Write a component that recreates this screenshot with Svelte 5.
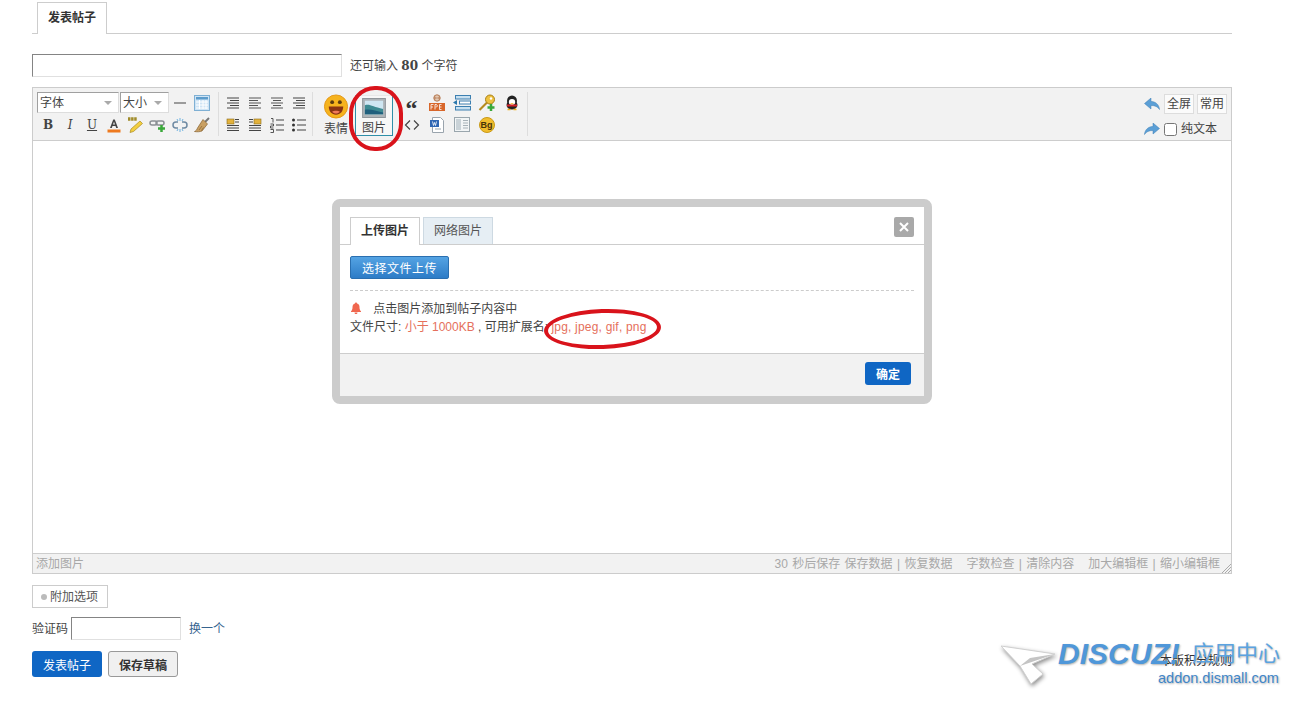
<script lang="ts">
  const tools = [
    { id: 'bold', label: 'B' },
    { id: 'italic', label: 'I' },
    { id: 'underline', label: 'U' }
  ];
</script>

{#snippet lines(kind: string)}
  <svg class="ico" viewBox="0 0 16 16" width="16" height="16">
    {#if kind === 'right'}
      <path d="M2 3h12M5 5.500h9M2 8h12M5 10.500h9M2 13h12" stroke="#444" fill="none" />
    {:else if kind === 'left'}
      <path d="M2 3h12M2 5.500h9M2 8h12M2 10.500h9M2 13h12" stroke="#555" fill="none" />
    {:else if kind === 'center'}
      <path d="M2 3h12M4 5.500h8M2 8h12M4 10.500h8M2 13h12" stroke="#555" fill="none" />
    {:else}
      <path d="M2 3h12M2 5.500h12M2 8h12M2 10.500h12M2 13h12" stroke="#444" fill="none" />
    {/if}
  </svg>
{/snippet}

<div class="page">
  <div class="tabs"><span class="tab">发表帖子</span></div>

  <div class="subject">
    <input class="subject-input" type="text" />
    <span>还可输入 <strong>80</strong> 个字符</span>
  </div>

  <div class="editor">
    <div class="toolbar">
      <div class="group g-font">
        <span class="sel sel-font">字体<i class="caret"></i></span>
        <span class="sel sel-size">大小<i class="caret"></i></span>
        <span class="cell">
          <svg class="ico" viewBox="0 0 16 16" width="16" height="16"><path d="M2 8h12" stroke="#444" /></svg>
        </span>
        <span class="cell">
          <svg class="ico" viewBox="0 0 16 16" width="16" height="16">
            <rect x=".5" y=".5" width="15" height="15" fill="#cfe4f5" stroke="#7fb0d4" />
            <rect x="2" y="2" width="12" height="2.500" fill="#5d9ccb" />
            <path d="M2 7h12M2 10h12M2 13h12M5.500 5v9M9 5v9M12 5v9" stroke="#fff" />
          </svg>
        </span>
        {#each tools as t}
          <span class="cell txt {t.id}">{t.label}</span>
        {/each}
        <span class="cell">
          <svg class="ico" viewBox="0 0 16 16" width="16" height="16">
            <path d="M4 11 7.200 2.500h1.600L12 11h-1.800l-.7-2h-3l-.7 2zM7 7.600h2L8 4.800z" fill="#444" />
            <rect x="1.500" y="12.500" width="13" height="3" fill="#ee7a1f" />
          </svg>
        </span>
        <span class="cell">
          <svg class="ico" viewBox="0 0 18 18" width="18" height="18">
            <path d="M3 16.500 4 13 13 5l2.500 2.500-9 8z" fill="#f3cf3f" stroke="#a98a22" stroke-width=".7" />
            <path d="M1 3h9" stroke="#a08c2b" stroke-width="3.500" stroke-dasharray="2.500 .6" />
          </svg>
        </span>
        <span class="cell">
          <svg class="ico" viewBox="0 0 18 18" width="18" height="18">
            <rect x="1" y="5" width="7" height="4" rx="2" fill="none" stroke="#8a8f94" stroke-width="1.500" />
            <rect x="7" y="5" width="8" height="4" rx="2" fill="none" stroke="#8a8f94" stroke-width="1.500" />
            <path d="M12.500 9v7M9 12.500h7" stroke="#3aa83a" stroke-width="2.500" />
          </svg>
        </span>
        <span class="cell">
          <svg class="ico" viewBox="0 0 18 18" width="18" height="18">
            <path d="M7 6H5a3 3 0 0 0 0 6h2M11 6h2a3 3 0 0 1 0 6h-2" fill="none" stroke="#6e8aa3" stroke-width="1.500" />
            <path d="M9 2v3M6 3l1 2M12 3l-1 2M9 13v3M6 15l1-2M12 15l-1-2" stroke="#6fb2e0" />
          </svg>
        </span>
        <span class="cell">
          <svg class="ico" viewBox="0 0 18 18" width="18" height="18">
            <path d="M12 6 16 2" stroke="#777" stroke-width="2" />
            <path d="M10 3.500 14.500 8 9 15c-2 .8-5 1-7.500.5 2-1 2.500-2 3-3.500z" fill="#c9a063" stroke="#86622f" stroke-width=".7" />
            <path d="M6 14l3-4M8.500 14.500l2-3" stroke="#86622f" stroke-width=".7" />
          </svg>
        </span>
      </div>

      <div class="group g-align">
        <span class="cell">{@render lines('right')}</span>
        <span class="cell">{@render lines('left')}</span>
        <span class="cell">{@render lines('center')}</span>
        <span class="cell">{@render lines('right')}</span>
        <span class="cell">
          <svg class="ico" viewBox="0 0 16 16" width="16" height="16">
            <rect x="2" y="2" width="7" height="5" fill="#e3b23c" stroke="#8b6c1b" stroke-width=".6" />
            <path d="M10 2.500h4M10 5h4M2 8.500h12M2 11h12M2 13.500h12" stroke="#444" />
          </svg>
        </span>
        <span class="cell">
          <svg class="ico" viewBox="0 0 16 16" width="16" height="16">
            <rect x="7" y="2" width="7" height="5" fill="#e3b23c" stroke="#8b6c1b" stroke-width=".6" />
            <path d="M2 2.500h4M2 5h4M2 8.500h12M2 11h12M2 13.500h12" stroke="#444" />
          </svg>
        </span>
        <span class="cell">
          <svg class="ico" viewBox="0 0 16 16" width="16" height="16">
            <path d="M7 3h8M7 8h8M7 13h8" stroke="#444" />
            <path d="M2 1.500h2v4M1.500 7h3v2h-3v2h3M1.500 12.500h3v3h-3" fill="none" stroke="#444" stroke-width=".9" />
          </svg>
        </span>
        <span class="cell">
          <svg class="ico" viewBox="0 0 16 16" width="16" height="16">
            <path d="M6 3h9M6 8h9M6 13h9" stroke="#444" />
            <circle cx="2.500" cy="3" r="1.500" fill="#333" />
            <circle cx="2.500" cy="8" r="1.500" fill="#333" />
            <circle cx="2.500" cy="13" r="1.500" fill="#333" />
          </svg>
        </span>
      </div>

      <div class="group g-insert">
        <div class="big">
          <svg viewBox="0 0 26 26" width="26" height="26">
            <circle cx="13" cy="13" r="12" fill="#f6b31d" stroke="#e3981a" />
            <circle cx="9" cy="8.500" r="2" fill="#5a3a10" />
            <circle cx="17" cy="8.500" r="2" fill="#5a3a10" />
            <path d="M5.500 13h15c0 5-3 8.500-7.500 8.500S5.500 18 5.500 13z" fill="#8a3312" />
            <path d="M9 18.500c2-1.500 6-1.500 8 0-2 2.500-6 2.500-8 0z" fill="#f07a5a" />
          </svg>
          <span>表情</span>
        </div>
        <div class="big active">
          <svg viewBox="0 0 26 22" width="26" height="22">
            <rect x=".5" y=".5" width="25" height="21" fill="#aeb4b8" stroke="#8a9196" />
            <rect x="3" y="3" width="20" height="15" fill="#cfe6f2" />
            <path d="M3 8c5-2 9 2 20 4v6H3z" fill="#3d8a92" />
            <path d="M3 13c6-1 12 1 20 3v2H3z" fill="#1f5f7d" />
          </svg>
          <span>图片</span>
        </div>
        <div class="g-misc">
          <span class="cell"><b class="quote">“</b></span>
          <span class="cell">
            <svg class="ico" viewBox="0 0 16 16" width="16" height="16"><path d="M6 3.500 1.500 8 6 12.500M10 3.500 14.500 8 10 12.500" fill="none" stroke="#444" stroke-width="1.200" /></svg>
          </span>
          <span class="cell">
            <svg class="ico" viewBox="0 0 18 18" width="18" height="18">
              <circle cx="9" cy="4" r="3.200" fill="#e4c9b4" stroke="#b57a52" />
              <path d="M7 2.500v3M11 2.500v3M6 4h6" stroke="#b57a52" stroke-width=".7" />
              <rect x="1" y="9" width="16" height="8" fill="#d8662a" />
              <path d="M3 15.500v-5h2.500M3 13h2M7 15.500v-5h1.500l1 1.500-1 1-1 0M11.500 10.500v5M11.500 10.500h2M11.500 13h2M11.500 15.500h2" fill="none" stroke="#fff" stroke-width=".8" />
            </svg>
          </span>
          <span class="cell">
            <svg class="ico" viewBox="0 0 16 16" width="16" height="16">
              <path d="M3.500 .5h8l3 3v12h-11z" fill="#fff" stroke="#9aa4ad" />
              <rect x="1" y="3" width="9" height="7" fill="#2f66b3" />
              <path d="M2.500 4.500l1 4 1-3 1 3 1-4" transform="translate(1 0)" fill="none" stroke="#fff" stroke-width=".8" />
              <path d="M6 12h6" stroke="#9aa4ad" />
            </svg>
          </span>
          <span class="cell">
            <svg class="ico" viewBox="0 0 18 18" width="18" height="18">
              <rect x="2.500" y="1.500" width="15" height="3.500" fill="#c8e0f0" stroke="#3c7fb0" />
              <rect x="6.500" y="7" width="11" height="3" fill="#fff" stroke="#3c7fb0" />
              <rect x="2.500" y="12.500" width="15" height="3.500" fill="#c8e0f0" stroke="#3c7fb0" />
              <path d="M0 8.500 4 6v5z" fill="#2b78ad" />
            </svg>
          </span>
          <span class="cell">
            <svg class="ico" viewBox="0 0 18 18" width="18" height="18">
              <rect x="1.500" y="1.500" width="15" height="14" fill="#f2f5f6" stroke="#9aa6ad" />
              <rect x="3" y="3" width="5" height="11" fill="#c9d2d7" />
              <path d="M10 4.500h5M10 7h5M10 9.500h5M10 12h5" stroke="#a7b2b8" />
            </svg>
          </span>
          <span class="cell">
            <svg class="ico" viewBox="0 0 18 18" width="18" height="18">
              <circle cx="12" cy="5.500" r="4.500" fill="#eec13f" stroke="#a98017" />
              <circle cx="13" cy="4.500" r="1.200" fill="#fff" />
              <path d="M9 8.500 1.500 16" stroke="#b58a1f" stroke-width="2.200" />
              <path d="M13 10v7M9.500 13.500h7" stroke="#3aa83a" stroke-width="2.500" />
            </svg>
          </span>
          <span class="cell">
            <span class="bg-badge">Bg</span>
          </span>
          <span class="cell">
            <svg class="ico" viewBox="0 0 16 16" width="16" height="16">
              <ellipse cx="8" cy="6" rx="5" ry="5.500" fill="#222" />
              <ellipse cx="8" cy="10" rx="5.500" ry="4.500" fill="#222" />
              <ellipse cx="8" cy="7" rx="3.200" ry="3" fill="#fff" />
              <path d="M3 9.500h10v2H3z" fill="#d8232a" />
              <path d="M6 8.200h4L8 9.600z" fill="#f3b21c" />
              <path d="M3.500 14.500h3M9.500 14.500h3" stroke="#f3b21c" stroke-width="1.500" />
            </svg>
          </span>
        </div>
      </div>

      <div class="right">
        <div class="right-row">
          <svg class="arrow" viewBox="0 0 16 12" width="16" height="12"><path d="M7 0v3.500c4 0 8 2.500 8.500 8C13.500 8.500 11 7.500 7 7.500V11L.5 5.500z" fill="#5b9fd6" stroke="#3c7fb5" stroke-width=".5" /></svg>
          <span class="mini">全屏</span>
          <span class="mini">常用</span>
        </div>
        <div class="right-row">
          <svg class="arrow" viewBox="0 0 16 12" width="16" height="12"><path d="M9 0v3.500c-4 0-8 2.500-8.500 8C2.500 8.500 5 7.500 9 7.500V11l6.500-5.500z" fill="#5b9fd6" stroke="#3c7fb5" stroke-width=".5" /></svg>
          <label class="plain"><input type="checkbox" />纯文本</label>
        </div>
      </div>
    </div>

    <div class="area">
      <div class="dialog">
        <div class="dialog-tabs">
          <span class="d-tab on">上传图片</span>
          <span class="d-tab">网络图片</span>
          <span class="close">
            <svg viewBox="0 0 10 10" width="10" height="10"><path d="M1 1l8 8M9 1 1 9" stroke="#fff" stroke-width="2" /></svg>
          </span>
        </div>
        <div class="dialog-body">
          <button class="upload">选择文件上传</button>
          <div class="notice">
            <p>
              <svg viewBox="0 0 12 12" width="12" height="12"><path d="M6 .5c.7 0 1 .5 1 1 2 .5 2.500 2 2.500 4 0 2 .7 3 1.500 3.800v.7H1v-.7C1.800 8.500 2.500 7.500 2.500 5.500c0-2 .5-3.500 2.500-4 0-.5.300-1 1-1zM4.500 10.500h3C7.500 11.500 6.800 12 6 12s-1.500-.5-1.500-1.500z" fill="#f0674f" /></svg>
              点击图片添加到帖子内容中
            </p>
            <p>文件尺寸: <em>小于 1000KB</em> , 可用扩展名: <em class="exts">jpg, jpeg, gif, png</em></p>
          </div>
        </div>
        <div class="dialog-foot"><button class="primary small">确定</button></div>
      </div>
    </div>

    <div class="status">
      <span class="add">添加图片</span>
      <span class="status-right">
        <span>30 秒后保存 保存数据 | 恢复数据</span>
        <span>字数检查 | 清除内容</span>
        <span>加大编辑框 | 缩小编辑框</span>
      </span>
      <svg class="grip" viewBox="0 0 10 10" width="10" height="10"><path d="M10 1 1 10M10 4 4 10M10 7 7 10" stroke="#aaa" /></svg>
    </div>
  </div>

  <div class="extra"><span class="dot"></span>附加选项</div>

  <div class="captcha">
    <span>验证码</span>
    <input type="text" />
    <a href="#top">换一个</a>
  </div>

  <div class="actions">
    <button class="primary">发表帖子</button>
    <button class="plain-btn">保存草稿</button>
    <span class="rules">本版积分规则</span>
  </div>

  <!-- red hand-drawn marks -->
  <div class="mark mark-a"></div>
  <div class="mark mark-b"></div>

  <div class="watermark">
    <svg class="wm-cursor" viewBox="0 0 56 42" width="56" height="42">
      <path d="M1 3 55 11 32 21 43 31 31 41 20 23z" fill="#fff" stroke="#d0d0d0" />
      <path d="M20 23 55 11 30 15z" fill="#c4c4c4" />
    </svg>
    <div class="wm-text">
      <div class="wm-top"><b>DISCUZ!</b><span>应用中心</span></div>
      <div class="wm-url">addon.dismall.com</div>
    </div>
  </div>
</div>

<style>
  :global(body) {
    margin: 0;
    background: #fff;
  }

  .page {
    position: relative;
    box-sizing: border-box;
    width: 1297px;
    height: 701px;
    padding: 2px 65px 0 32px;
    overflow: hidden;
    font: 12px/1.5 "Liberation Sans", "Noto Sans CJK SC", sans-serif;
    color: #444;
  }

  .tabs {
    display: flex;
    height: 31px;
    padding-left: 5px;
    border-bottom: 1px solid #cdcdcd;
  }

  .tab {
    box-sizing: border-box;
    width: 70px;
    height: 32px;
    border: 1px solid #cdcdcd;
    border-bottom: 0;
    background: #fff;
    text-align: center;
    line-height: 31px;
    font-weight: 700;
    color: #333;
  }

  .subject {
    display: flex;
    align-items: center;
    gap: 8px;
    margin-top: 20px;
    margin-bottom: 10px;
  }

  .subject strong {
    font: 700 12px "DejaVu Serif", serif;
  }

  .subject-input {
    box-sizing: border-box;
    width: 310px;
    height: 23px;
    margin: 0;
    border: 1px solid;
    border-color: #848484 #e0e0e0 #e0e0e0 #848484;
  }

  .editor {
    box-sizing: border-box;
    width: 1200px;
    height: 487px;
    border: 1px solid #ccc;
    display: flex;
    flex-direction: column;
  }

  .toolbar {
    display: flex;
    box-sizing: border-box;
    height: 53px;
    padding: 4px 4px 0;
    background: #f2f2f2;
    border-bottom: 1px solid #cdcdcd;
  }

  .group {
    display: grid;
    grid-auto-rows: 22px;
    height: 44px;
    border-right: 1px solid #ddd;
  }

  .g-font {
    width: 181px;
    grid-template-columns: repeat(8, 22px);
  }

  .g-align {
    width: 94px;
    padding-left: 3px;
    box-sizing: border-box;
    grid-template-columns: repeat(4, 22px);
  }

  .g-insert {
    display: flex;
    width: 215px;
    padding-left: 5px;
    box-sizing: border-box;
  }

  .g-misc {
    display: grid;
    grid-template-columns: repeat(5, 25px);
    grid-template-rows: 22px 22px;
    grid-auto-flow: column;
    margin-left: 6px;
  }

  .cell {
    display: flex;
    align-items: center;
    justify-content: center;
  }

  .txt {
    font: 700 12px "DejaVu Serif", serif;
    color: #444;
  }

  .italic {
    font-style: italic;
    font-weight: 400;
  }

  .underline {
    text-decoration: underline;
    font-weight: 400;
  }

  .sel {
    position: relative;
    box-sizing: border-box;
    height: 21px;
    padding-left: 2px;
    background: #fff;
    border: 1px solid;
    border-color: #a0a0a0 #ddd #ddd #a0a0a0;
    line-height: 20px;
    font-size: 12px;
  }

  .sel-font {
    grid-column: span 4;
    width: 82px;
  }

  .sel-size {
    grid-column: span 2;
    width: 49px;
    margin-left: -5px;
  }

  .caret {
    position: absolute;
    right: 6px;
    top: 8px;
    border: 4px solid transparent;
    border-top: 4px solid #aaa;
    border-bottom: 0;
  }

  .big {
    display: flex;
    flex-direction: column;
    align-items: center;
    box-sizing: border-box;
    width: 36px;
    color: #444;
    line-height: 14px;
  }

  .big svg {
    margin-top: 2px;
    margin-bottom: 3px;
  }

  .big.active {
    width: 38px;
    height: 41px;
    margin-left: 1px;
    margin-top: 3px;
    border: 1px solid #2f8fa8;
    border-top-color: #e8e8e8;
    background: #f7f7f7;
  }

  .quote {
    font: 700 24px/1 "Liberation Serif", serif;
    margin-top: 10px;
    color: #333;
  }

  .bg-badge {
    display: block;
    width: 16px;
    height: 16px;
    border-radius: 50%;
    background: #f1bd2d;
    border: 1px solid #c99a17;
    box-sizing: border-box;
    font-size: 9px;
    font-weight: 700;
    line-height: 14px;
    text-align: center;
    color: #4a3408;
  }

  .right {
    margin-left: auto;
    display: flex;
    flex-direction: column;
    gap: 3px;
    padding-top: 1px;
  }

  .right-row {
    display: flex;
    align-items: center;
    height: 21px;
    gap: 3px;
  }

  .right-row + .right-row {
    align-items: flex-end;
  }

  .arrow {
    margin-right: 1px;
  }

  .right-row + .right-row .arrow {
    margin-bottom: 3px;
  }

  .mini {
    box-sizing: border-box;
    width: 30px;
    height: 20px;
    background: #fbfbfb;
    border: 1px solid #ddd;
    line-height: 19px;
    text-align: center;
  }

  .plain {
    display: flex;
    align-items: center;
    width: 63px;
    color: #444;
  }

  .plain input {
    width: 13px;
    height: 13px;
    margin: 0 4px 0 0;
  }

  .area {
    flex: 1;
    position: relative;
    background: #fff;
  }

  .dialog {
    position: absolute;
    left: 299px;
    top: 58px;
    box-sizing: border-box;
    width: 600px;
    height: 205px;
    display: flex;
    flex-direction: column;
    background: #fff;
    border: 8px solid #ccc;
    border-radius: 8px;
  }

  .dialog-tabs {
    display: flex;
    gap: 3px;
    align-items: flex-end;
    height: 38px;
    padding-left: 10px;
    border-bottom: 1px solid #cdcdcd;
    box-sizing: border-box;
    position: relative;
  }

  .d-tab {
    box-sizing: border-box;
    width: 70px;
    height: 27px;
    border: 1px solid #cdd9e2;
    border-bottom: 0;
    background: #e6eef4;
    line-height: 26px;
    text-align: center;
    color: #555;
  }

  .d-tab.on {
    height: 28px;
    margin-bottom: -1px;
    border-color: #cdcdcd;
    background: #fff;
    font-weight: 700;
    color: #333;
  }

  .close {
    position: absolute;
    right: 10px;
    top: 10px;
    display: flex;
    align-items: center;
    justify-content: center;
    width: 20px;
    height: 20px;
    background: #a9a9a9;
    border-radius: 2px;
  }

  .dialog-body {
    flex: 1;
    padding: 11px 10px 0;
  }

  .upload {
    display: block;
    box-sizing: border-box;
    width: 99px;
    height: 23px;
    padding: 0;
    border: 1px solid #2a6fb0;
    border-radius: 2px;
    background: linear-gradient(#54a3e3, #2d7cc7);
    color: #fff;
    font: 12px "Liberation Sans", "Noto Sans CJK SC", sans-serif;
    letter-spacing: .5px;
  }

  .notice {
    margin-top: 11px;
    padding-top: 9px;
    border-top: 1px dashed #ccc;
  }

  .notice p {
    margin: 0;
    height: 18px;
    line-height: 18px;
  }

  .notice svg {
    margin-right: 8px;
    vertical-align: -1px;
  }

  .notice em {
    font-style: normal;
    color: #e5705c;
  }

  .notice .exts {
    letter-spacing: .2px;
  }

  .dialog-foot {
    display: flex;
    justify-content: flex-end;
    box-sizing: border-box;
    height: 43px;
    padding: 8px 13px 0;
    background: #f2f2f2;
    border-top: 1px solid #cdcdcd;
  }

  .status {
    position: relative;
    display: flex;
    justify-content: space-between;
    box-sizing: border-box;
    height: 20px;
    padding: 0 11px 0 3px;
    background: #f2f2f2;
    border-top: 1px solid #cdcdcd;
    line-height: 20px;
    color: #a8a8a8;
  }

  .status-right {
    display: flex;
    gap: 14px;
    word-spacing: 1px;
  }

  .grip {
    position: absolute;
    right: 0;
    bottom: 0;
  }

  .extra {
    display: flex;
    align-items: center;
    box-sizing: border-box;
    width: 76px;
    height: 23px;
    margin-top: 11px;
    padding-left: 8px;
    border: 1px solid #ccc;
    color: #555;
  }

  .dot {
    width: 6px;
    height: 6px;
    margin-right: 3px;
    border-radius: 50%;
    background: #bbb;
  }

  .captcha {
    display: flex;
    align-items: center;
    margin-top: 9px;
    height: 23px;
  }

  .captcha input {
    box-sizing: border-box;
    width: 110px;
    height: 23px;
    margin: 0 8px 0 3px;
    border: 1px solid;
    border-color: #848484 #e0e0e0 #e0e0e0 #848484;
  }

  .captcha a {
    color: #36648f;
    text-decoration: none;
  }

  .actions {
    display: flex;
    align-items: center;
    gap: 6px;
    margin-top: 11px;
  }

  .primary,
  .plain-btn {
    box-sizing: border-box;
    width: 70px;
    height: 26px;
    padding: 0;
    border-radius: 3px;
    font: 12px "Liberation Sans", "Noto Sans CJK SC", sans-serif;
  }

  .primary {
    border: 0;
    background: #0f66c4;
    color: #fff;
  }

  .primary.small {
    width: 46px;
    height: 23px;
    font-weight: 700;
  }

  .plain-btn {
    border: 1px solid #999;
    background: #f0f0f0;
    color: #333;
    font-weight: 700;
  }

  .rules {
    margin-left: auto;
    color: #333;
    position: relative;
    top: -3px;
  }

  .mark {
    position: absolute;
    box-sizing: border-box;
    border: 4px solid #d9131b;
    border-radius: 50%;
    pointer-events: none;
  }

  .mark-a {
    left: 349px;
    top: 86px;
    width: 54px;
    height: 65px;
    border-radius: 48% / 42%;
  }

  .mark-b {
    left: 544px;
    top: 309px;
    width: 117px;
    height: 40px;
    transform: rotate(-2deg);
  }

  .watermark {
    position: absolute;
    left: 1000px;
    top: 640px;
    display: flex;
    pointer-events: none;
  }

  .wm-cursor {
    margin-top: 3px;
    filter: drop-shadow(1px 2px 2px rgba(0, 0, 0, .45));
  }

  .wm-text {
    margin-left: 2px;
    text-shadow: 1px 1px 2px rgba(0, 0, 0, .3);
  }

  .wm-top {
    display: flex;
    align-items: center;
    height: 27px;
    white-space: nowrap;
  }

  .wm-top b {
    font: italic 900 30px/27px "Liberation Sans", sans-serif;
    color: #4f97d9;
    width: 134px;
  }

  .wm-top span {
    font-size: 22px;
    color: #5ba3e0;
  }

  .wm-url {
    margin-top: 1px;
    margin-left: 100px;
    font-size: 14.500px;
    line-height: 20px;
    color: #3f86c9;
  }
</style>
